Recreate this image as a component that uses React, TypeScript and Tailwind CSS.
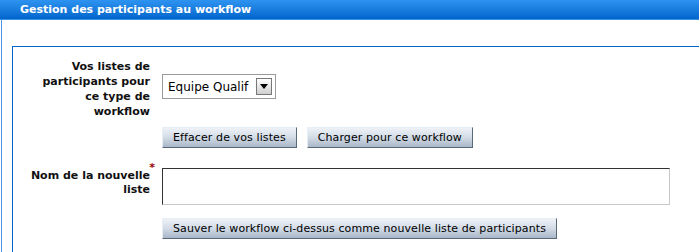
const font = { fontFamily: '"DejaVu Sans", Verdana, sans-serif' }

function Btn({ children }: { children: React.ReactNode }) {
  return (
    <button
      className="h-[21px] px-[10px] text-[11px] tracking-[0.1px] leading-none text-black border border-t-[#e8eef6] border-l-[#e8eef6] border-b-[#5b6878] border-r-[#5b6878] bg-gradient-to-b from-[#eef2f7] via-[#d2dbe6] to-[#a9b7c8]"
      style={font}
    >
      {children}
    </button>
  )
}

export default function App() {
  return (
    <div className="w-[699px] h-[252px] bg-white overflow-hidden" style={font}>
      <div className="h-[20px] bg-gradient-to-b from-[#2d93f0] to-[#0066cc] border-b border-[#3d8fe0] flex items-center pl-[20px]">
        <span className="text-[11px] font-bold text-white leading-none">Gestion des participants au workflow</span>
      </div>

      <div className="ml-[1px] border-l border-[#4a94e4] h-[232px] pt-[26px] pl-[10px]">
        <div className="border-t border-l border-[#0066cc] h-[300px] pt-[12px]">
          {/* liste existante */}
          <div className="flex items-start">
            <div className="ml-[15px] w-[122px] text-right text-[11px] font-bold leading-[15px] text-[#111]">
              Vos listes de participants pour ce type de workflow
            </div>
            <div className="ml-[12px] mt-[15px] w-[114px] h-[25px] border border-[#9a9a9a] bg-white flex items-center justify-between pl-[5px] pr-[3px]">
              <span className="text-[12px] text-black leading-none">Equipe Qualif</span>
              <span className="w-[16px] h-[17px] bg-gradient-to-b from-[#ffffff] to-[#cfcfcf] border border-[#777] flex items-center justify-center">
                <svg width="8" height="5" viewBox="0 0 8 5">
                  <path d="M0 0h8L4 5z" fill="#000" />
                </svg>
              </span>
            </div>
          </div>

          <div className="flex gap-[10px] ml-[149px] mt-[8px]">
            <Btn>Effacer de vos listes</Btn>
            <Btn>Charger pour ce workflow</Btn>
          </div>

          {/* nouvelle liste */}
          <div className="flex items-start mt-[20px]">
            <div className="ml-[15px] w-[122px] text-right text-[11px] font-bold leading-[14px] text-[#111] relative pt-[1px]">
              Nom de la nouvelle liste
              <span className="absolute right-[-5px] top-[-7px] text-[#990000] text-[11px] font-bold">*</span>
            </div>
            <div className="ml-[12px] w-[508px] h-[37px] border border-t-[#333] border-l-[#333] border-b-[#c8c8c8] border-r-[#c8c8c8] bg-white" />
          </div>

          <div className="ml-[149px] mt-[10px]">
            <Btn>Sauver le workflow ci-dessus comme nouvelle liste de participants</Btn>
          </div>
        </div>
      </div>
    </div>
  )
}
